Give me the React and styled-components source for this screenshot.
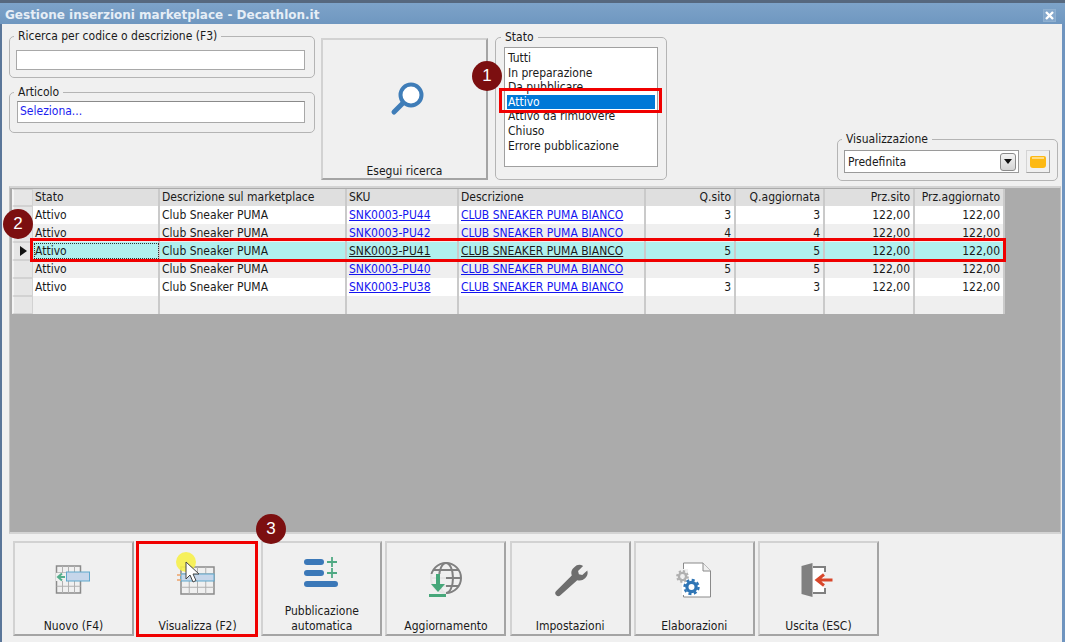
import React from 'react';
import styled, { createGlobalStyle } from 'styled-components';

const GlobalStyle = createGlobalStyle`
    html, body {
        margin: 0;
        padding: 0;
        background: #f0f0f0;
        overflow: hidden;
    }
    * {
        box-sizing: border-box;
    }
`;

const uiFont = `"DejaVu Sans Condensed", "Liberation Sans", sans-serif`;

const Shell = styled.div`
    position: relative;
    width: 1065px;
    height: 642px;
    display: flex;
    flex-direction: column;
    background: #f0f0f0;
    border-left: 2px solid #5a7699;
    border-right: 3px solid #6f94bf;
    font-family: ${uiFont};
    font-size: 12px;
    color: #1a1a1a;
`;
const TitleBar = styled.div`
    height: 24px;
    margin: 0 -3px 0 -2px;
    padding: 3px 9px 0 5px;
    display: flex;
    align-items: center;
    justify-content: space-between;
    border-top: 3px solid #56687e;
    background: linear-gradient(#7da3c9, #6f97c0);
`;
const Title = styled.span`
    font-family: "DejaVu Sans", sans-serif;
    font-weight: bold;
    font-size: 12px;
    color: #e6eef6;
`;
const CloseButton = styled.div`
    width: 13px;
    height: 13px;
    display: flex;
    align-items: center;
    justify-content: center;
    background: #85a8cc;
    border: 1px solid #8fb0d0;
`;
const TopRow = styled.div`
    height: 162px;
    padding: 5px 0 0 7px;
    display: flex;
    align-items: flex-start;
`;
const LeftColumn = styled.div`
    width: 306px;
    display: flex;
    flex-direction: column;
    gap: 7px;
`;
const Group = styled.fieldset`
    margin: ${p => p.$top || 0}px 0 0 0;
    padding: ${p => p.$pad};
    min-width: 0;
    width: ${p => p.$width || 'auto'};
    border: 1px solid #b4b4b4;
    border-radius: 5px;
`;
const GroupLabel = styled.legend`
    margin-left: ${p => p.$indent}px;
    padding: 0 4px;
    height: 14px;
    line-height: 14px;
    font-size: 12px;
`;
const SearchInput = styled.div`
    height: ${p => p.$height}px;
    padding-left: 2px;
    line-height: ${p => p.$height - 3}px;
    color: #1c1cf0;
    background: #fff;
    border: 1px solid #a8a8a8;
    border-top-color: ${p => (p.$sunken ? '#8a8a8a' : '#a8a8a8')};
`;
const SearchButton = styled.div`
    width: 167px;
    height: 142px;
    margin: 9px 7px 0 6px;
    display: flex;
    flex-direction: column;
    align-items: center;
    background: #f0f0f0;
    border: 2px solid #d2d2d2;
    border-right-color: #a4a4a4;
    border-bottom-color: #a4a4a4;
`;
const SearchIconSlot = styled.div`
    flex: 1;
    padding: 39px 0 0 4px;
`;
const StatoList = styled.div`
    height: 120px;
    padding: 3px 2px;
    background: #fff;
    border: 1px solid #a0a0a0;
`;
const StatoItem = styled.div`
    height: 14.6px;
    line-height: 14.6px;
    padding-left: 1px;
    background: ${p => (p.$selected ? '#0078d7' : 'transparent')};
    color: ${p => (p.$selected ? '#fff' : '#1a1a1a')};
`;
const ViewGroup = styled.div`
    margin-left: auto;
    margin-right: 4px;
    align-self: flex-end;
    padding-bottom: 5px;
`;
const ViewRow = styled.div`
    display: flex;
    align-items: center;
    gap: 7px;
`;
const Combo = styled.div`
    width: 175px;
    height: 23px;
    padding: 0 2px 0 3px;
    display: flex;
    align-items: center;
    justify-content: space-between;
    background: #fff;
    border: 1px solid #9a9a9a;
`;
const ComboArrow = styled.div`
    width: 16px;
    height: 18px;
    display: flex;
    align-items: center;
    justify-content: center;
    background: linear-gradient(#f4f4f4, #d4d4d4);
    border: 1px solid #8a8a8a;
    border-radius: 3px;
`;
const FolderButton = styled.div`
    width: 24px;
    height: 23px;
    display: flex;
    align-items: center;
    justify-content: center;
    background: #f0f0f0;
    border: 1px solid #d4d4d4;
    border-right-color: #a4a4a4;
    border-bottom-color: #a4a4a4;
`;
const GridPanel = styled.div`
    width: 1052px;
    height: 348px;
    margin-left: 7px;
    padding: 1px 0 0 2px;
    background: #ababab;
    border: 2px solid #d4d4d4;
    border-left: 1px solid #c4c4c4;
    border-right: 1px solid #c4c4c4;
`;
const columns = '21px 127px 187px 112px 187px 90px 89px 90px 90px';
const HeaderRow = styled.div`
    display: grid;
    grid-template-columns: ${columns};
    width: 993px;
    height: 17px;
    background: #dfdfdf;
`;
const HeaderCell = styled.div`
    padding: 0 ${p => (p.$right ? '3px' : '2px')};
    line-height: 16px;
    text-align: ${p => (p.$right ? 'right' : 'left')};
    border-right: 2px solid #cacaca;
    white-space: nowrap;
`;
const Row = styled.div`
    display: grid;
    grid-template-columns: ${columns};
    width: 993px;
    height: 18px;
    background: ${p => p.$bg};
`;
const Indicator = styled.div`
    display: flex;
    align-items: center;
    justify-content: center;
    background: #e6e6e6;
    border: 1px solid #d2d2d2;
    border-left: 2px solid #f4f4f4;
`;
const Cell = styled.div`
    padding: 0 ${p => (p.$right ? '3px' : '2px')};
    line-height: 18px;
    text-align: ${p => (p.$right ? 'right' : 'left')};
    border-right: 2px solid #cacaca;
    white-space: nowrap;
    ${p => p.$focus && 'outline: 1px dotted #333; outline-offset: -2px;'}
`;
const CellLink = styled.span`
    text-decoration: underline;
    color: ${p => (p.$current ? '#1a1a1a' : '#1414f0')};
`;
const Toolbar = styled.div`
    margin: 7px 0 0 11px;
    display: flex;
    gap: 3.17px;
`;
const ToolButton = styled.div`
    width: 121px;
    height: 95px;
    padding: 15px 0 0;
    display: flex;
    flex-direction: column;
    align-items: center;
    background: #f0f0f0;
    border: 2px solid #d2d2d2;
    border-right-color: #a4a4a4;
    border-bottom-color: #a4a4a4;
`;
const ToolIcon = styled.svg`
    width: 48px;
    height: 48px;
    margin-top: -2px;
    flex: none;
`;
const ToolLabel = styled.div`
    flex: 1;
    display: flex;
    align-items: flex-end;
    text-align: center;
    line-height: 15px;
`;
const Badge = styled.div`
    position: absolute;
    left: ${p => p.$x - 2}px;
    top: ${p => p.$y}px;
    width: 30px;
    height: 30px;
    border-radius: 50%;
    background: #7c0f10;
    color: #fff;
    font-family: "Liberation Sans", sans-serif;
    font-size: 17px;
    line-height: 30px;
    text-align: center;
`;
const RedBox = styled.div`
    position: absolute;
    left: ${p => p.$x - 2}px;
    top: ${p => p.$y}px;
    width: ${p => p.$w}px;
    height: ${p => p.$h}px;
    border: 3px solid #f00000;
`;
const Pointer = styled.svg`
    position: absolute;
    left: 170px;
    top: 550px;
    width: 32px;
    height: 40px;
`;

const statoItems = ['Tutti', 'In preparazione', 'Da pubblicare', 'Attivo', 'Attivo da rimuovere', 'Chiuso', 'Errore pubblicazione'];
const headers = ['Stato', 'Descrizione sul marketplace', 'SKU', 'Descrizione', 'Q.sito', 'Q.aggiornata', 'Prz.sito', 'Prz.aggiornato'];
const rows = [
    { sku: 'SNK0003-PU44', qty: 3, bg: '#fff' },
    { sku: 'SNK0003-PU42', qty: 4, bg: '#efefef' },
    { sku: 'SNK0003-PU41', qty: 5, bg: '#b0f0ee', current: true },
    { sku: 'SNK0003-PU40', qty: 5, bg: '#efefef' },
    { sku: 'SNK0003-PU38', qty: 3, bg: '#fff' },
];

const MiniGrid = ({ x, y, w, h }) => {
    const cw = w / 4;
    const ch = h / 4;
    return (
        <g fill="none" stroke="#8a8a8a">
            <rect x={x} y={y} width={w} height={h} strokeWidth="1.5" />
            {[1, 2, 3].map(i => <line key={i} x1={x + cw * i} y1={y} x2={x + cw * i} y2={y + h} strokeWidth="1" stroke="#b0b0b0" />)}
            {[1, 2, 3].map(i => <line key={i} x1={x} y1={y + ch * i} x2={x + w} y2={y + ch * i} strokeWidth="1" stroke="#b0b0b0" />)}
        </g>
    );
};

const NuovoIcon = () => (
    <ToolIcon viewBox="0 0 48 48">
        <MiniGrid x={6.5} y={10} w={24} h={27} />
        <rect x="6" y="17" width="10" height="8" fill="#f0f0f0" />
        <rect x="16.5" y="16" width="23" height="9" fill="#c6d6ea" stroke="#5fa8cc" />
        <path d="M15 21H9M12 17.5L8 21l4 3.5" fill="none" stroke="#55ae8c" strokeWidth="2" />
    </ToolIcon>
);
const VisualizzaIcon = () => (
    <ToolIcon viewBox="0 0 48 48">
        <MiniGrid x={7} y={11} w={33} h={27} />
        <rect x="7" y="18" width="33" height="7" fill="#c6d6ea" stroke="#5fa8cc" />
        <path d="M3 19h4M3 24h4" stroke="#eda36a" strokeWidth="1.5" />
    </ToolIcon>
);
const PubblicazioneIcon = () => (
    <ToolIcon viewBox="0 0 48 48">
        <g stroke="#3b78b8" strokeWidth="6" strokeLinecap="round">
            <line x1="9" y1="6" x2="23" y2="6" />
            <line x1="9" y1="17" x2="23" y2="17" />
            <line x1="9" y1="28" x2="37" y2="28" />
        </g>
        <path d="M34 1v10M29 6h10M34 12v10M29 17h10" stroke="#4fa983" strokeWidth="1.8" fill="none" />
    </ToolIcon>
);
const AggiornamentoIcon = () => (
    <ToolIcon viewBox="0 0 48 48">
        <g fill="none" stroke="#808080" strokeWidth="2">
            <circle cx="24" cy="22" r="15" />
            <ellipse cx="24" cy="22" rx="7" ry="15" />
            <line x1="9" y1="22" x2="39" y2="22" />
            <path d="M11 14h26M11 30h26" />
        </g>
        <rect x="5" y="18" width="19" height="24" fill="#f0f0f0" opacity="0.9" />
        <path d="M16 18v13" stroke="#47a77a" strokeWidth="4" />
        <path d="M9 28h14l-7 8z" fill="#47a77a" />
        <rect x="7" y="38" width="17" height="3" fill="#47a77a" />
    </ToolIcon>
);
const ImpostazioniIcon = () => (
    <ToolIcon viewBox="0 0 48 48">
        <path d="M29.5 8.5 A 9 9 0 0 1 40 7 L 34 13 L 35 17 L 39 18 L 45 12.5 A 9.5 9.5 0 0 1 33 24 L 13 42 A 3.5 3.5 0 0 1 8 37 L 26.5 18.5 A 9 9 0 0 1 29.5 8.5 Z" fill="#6e6e6e" transform="translate(3.5 4) scale(0.84)" />
    </ToolIcon>
);
const ElaborazioniIcon = () => (
    <ToolIcon viewBox="0 0 48 48">
        <path d="M13.5 7H33l7.5 8v26H13.5z" fill="#fff" stroke="#8a8a8a" />
        <path d="M33 7v8h7.5" fill="#f0f0f0" stroke="#8a8a8a" />
        <rect x="4" y="13" width="14" height="14" fill="#f0f0f0" />
        <rect x="12" y="22" width="18" height="17" fill="#fff" />
        <circle cx="12.5" cy="20.5" r="3.6" fill="none" stroke="#b0b0b0" strokeWidth="2.4" />
        <circle cx="12.5" cy="20.5" r="5.4" fill="none" stroke="#b0b0b0" strokeWidth="2" strokeDasharray="2.2 2" />
        <circle cx="21.5" cy="31" r="4.6" fill="none" stroke="#2f75b5" strokeWidth="3.2" />
        <circle cx="21.5" cy="31" r="7" fill="none" stroke="#2f75b5" strokeWidth="2.4" strokeDasharray="3 2.5" />
    </ToolIcon>
);
const UscitaIcon = () => (
    <ToolIcon viewBox="0 0 48 48">
        <path d="M19 11h12v5M31 32v5H19" fill="none" stroke="#808080" strokeWidth="2" />
        <rect x="19" y="12" width="11" height="24" fill="#fff" />
        <path d="M7.5 10L18.5 7v34l-11-3z" fill="#808080" />
        <path d="M38.5 24H24M30 18.5L23 24l7 5.5" fill="none" stroke="#d8472b" strokeWidth="3" />
    </ToolIcon>
);

const tools = [
    { label: 'Nuovo (F4)', Icon: NuovoIcon },
    { label: 'Visualizza (F2)', Icon: VisualizzaIcon },
    { label: <>Pubblicazione<br />automatica</>, Icon: PubblicazioneIcon },
    { label: 'Aggiornamento', Icon: AggiornamentoIcon },
    { label: 'Impostazioni', Icon: ImpostazioniIcon },
    { label: 'Elaborazioni', Icon: ElaborazioniIcon },
    { label: 'Uscita (ESC)', Icon: UscitaIcon },
];

export default function App() {
    return (
        <Shell>
            <GlobalStyle />
            <TitleBar>
                <Title>Gestione inserzioni marketplace - Decathlon.it</Title>
                <CloseButton>
                    <svg width="9" height="9" viewBox="0 0 9 9">
                        <path d="M1 1l7 7M8 1L1 8" stroke="#fff" strokeWidth="2.4" />
                    </svg>
                </CloseButton>
            </TitleBar>
            <TopRow>
                <LeftColumn>
                    <Group $pad="7px 9px 7px 6px">
                        <GroupLabel $indent={-2}>Ricerca per codice o descrizione (F3)</GroupLabel>
                        <SearchInput $height={20} />
                    </Group>
                    <Group $pad="2px 9px 9px 7px">
                        <GroupLabel $indent={-3}>Articolo</GroupLabel>
                        <SearchInput $height={22} $sunken>Seleziona...</SearchInput>
                    </Group>
                </LeftColumn>
                <SearchButton>
                    <SearchIconSlot>
                        <svg width="40" height="40" viewBox="0 0 40 40">
                            <circle cx="24" cy="16" r="10.5" fill="#fff" stroke="#3f7db8" strokeWidth="4" />
                            <path d="M16 24L7 33" stroke="#3f7db8" strokeWidth="5" strokeLinecap="round" />
                        </svg>
                    </SearchIconSlot>
                    Esegui ricerca
                </SearchButton>
                <Group $top={1} $width="172px" $pad="3px 8px 12px 8px">
                    <GroupLabel $indent={-3}>Stato</GroupLabel>
                    <StatoList>
                        {statoItems.map(item => (
                            <StatoItem key={item} $selected={item === 'Attivo'}>{item}</StatoItem>
                        ))}
                    </StatoList>
                </Group>
                <ViewGroup>
                    <Group $width="221px" $pad="4px 7px 7px 6px">
                        <GroupLabel $indent={-2}>Visualizzazione</GroupLabel>
                        <ViewRow>
                            <Combo>
                                Predefinita
                                <ComboArrow>
                                    <svg width="8" height="5" viewBox="0 0 8 5"><path d="M0 0h8L4 5z" fill="#111" /></svg>
                                </ComboArrow>
                            </Combo>
                            <FolderButton>
                                <svg width="18" height="13" viewBox="0 0 18 13">
                                    <path d="M1 3a2 2 0 0 1 2-2h12a2 2 0 0 1 2 2v7a3 3 0 0 1-3 3H4a3 3 0 0 1-3-3z" fill="#fdb913" />
                                    <path d="M3 3h12" stroke="#ffe9a8" strokeWidth="1.5" />
                                </svg>
                            </FolderButton>
                        </ViewRow>
                    </Group>
                </ViewGroup>
            </TopRow>
            <GridPanel>
                <HeaderRow>
                    <Indicator />
                    {headers.map((h, i) => <HeaderCell key={h} $right={i >= 4}>{h}</HeaderCell>)}
                </HeaderRow>
                {rows.map(r => (
                    <Row key={r.sku} $bg={r.bg}>
                        <Indicator>
                            {r.current && <svg width="7" height="10" viewBox="0 0 7 10"><path d="M0 0l7 5-7 5z" fill="#111" /></svg>}
                        </Indicator>
                        <Cell $focus={r.current}>Attivo</Cell>
                        <Cell>Club Sneaker PUMA</Cell>
                        <Cell><CellLink $current={r.current}>{r.sku}</CellLink></Cell>
                        <Cell><CellLink $current={r.current}>CLUB SNEAKER PUMA BIANCO</CellLink></Cell>
                        <Cell $right>{r.qty}</Cell>
                        <Cell $right>{r.qty}</Cell>
                        <Cell $right>122,00</Cell>
                        <Cell $right>122,00</Cell>
                    </Row>
                ))}
                <Row $bg="#efefef">
                    <Indicator />
                    {headers.map(h => <Cell key={h} />)}
                </Row>
            </GridPanel>
            <Toolbar>
                {tools.map(({ label, Icon }, i) => (
                    <ToolButton key={i}>
                        <Icon />
                        <ToolLabel>{label}</ToolLabel>
                    </ToolButton>
                ))}
            </Toolbar>
            <RedBox $x={499} $y={88} $w={163} $h={25} />
            <RedBox $x={30} $y={238} $w={976} $h={24} />
            <RedBox $x={136} $y={541} $w={122} $h={96} />
            <Badge $x={472} $y={61}>1</Badge>
            <Badge $x={3} $y={209}>2</Badge>
            <Badge $x={256} $y={514}>3</Badge>
            <Pointer viewBox="0 0 32 40">
                <circle cx="14" cy="12" r="10" fill="#f6f04a" opacity="0.9" />
                <path d="M14 12v17l4-4 3 7 3-1.5-3-6.5h6z" fill="#fff" stroke="#444" strokeWidth="1" />
            </Pointer>
        </Shell>
    );
}
